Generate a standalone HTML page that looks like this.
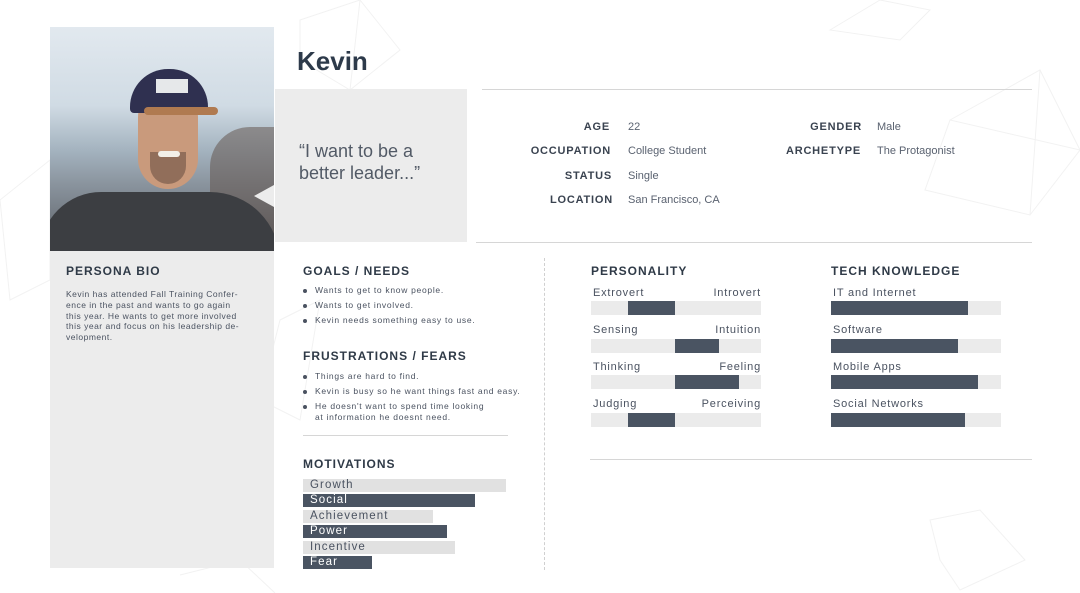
<!DOCTYPE html>
<html><head><meta charset="utf-8"><style>
*{margin:0;padding:0;box-sizing:border-box}
body{width:1080px;height:593px;background:#fff;position:relative;overflow:hidden;font-family:"Liberation Sans",sans-serif;color:#2f3a47}
.a{position:absolute}
.h{font-weight:bold;font-size:12px;letter-spacing:1px;color:#2f3a47}
.t{font-size:8.5px;letter-spacing:.7px;color:#4a5260;white-space:nowrap}
.lbl{font-weight:bold;font-size:11px;letter-spacing:.8px;text-align:right;width:150px;color:#3a4350}
.val{font-size:11px;color:#5a6270}
.bar{position:absolute;height:14px;background:#ebebeb}
.dk{position:absolute;height:14px;background:#4a5462}
.pl{font-size:11px;letter-spacing:.8px;color:#4a5260}
.mb{position:absolute;left:303px;height:13px;font-size:11.5px;letter-spacing:1.1px;padding-left:7px;line-height:13px}
.mb.l{background:#e1e1e1;color:#4a5260}.mb.d{background:#4a5462;color:#fff}
.dot{position:absolute;width:4px;height:4px;border-radius:50%;background:#4a5260}
</style></head><body>
<svg class="a" style="left:0;top:0" width="1080" height="593" stroke="#f2f2f2" fill="none" stroke-width="1">
<path d="M300 20 L360 0 L400 50 L350 90 L300 60Z M360 0 L350 90"/>
<path d="M950 120 L1040 70 L1080 150 L1030 215 L925 190Z M1040 70 L1030 215 M950 120 L1080 150"/>
<path d="M830 30 L880 0 L930 10 L900 40Z"/>
<path d="M0 200 L50 160 L50 280 L10 300Z"/>
<path d="M280 320 L320 300 L300 420 L260 400Z"/>
<path d="M930 520 L980 510 L1025 560 L960 590 L940 560Z"/>
<path d="M180 575 L240 560 L275 593"/>
</svg>
<!-- photo -->
<div class="a" style="left:50px;top:27px;width:224px;height:224px;overflow:hidden;background:linear-gradient(180deg,#e2e9ef 0%,#d0dbe4 35%,#a4b3bf 55%,#8a949e 70%,#5a5e64 100%)">
<div class="a" style="left:160px;top:100px;width:80px;height:120px;background:#5e4e46;border-radius:40px 0 0 0;opacity:.5"></div>
<div class="a" style="left:-10px;top:165px;width:240px;height:70px;background:#3c3e42;border-radius:70px 80px 0 0"></div>
<div class="a" style="left:88px;top:62px;width:60px;height:100px;background:#c99a7c;border-radius:28px 28px 30px 30px"></div>
<div class="a" style="left:80px;top:42px;width:78px;height:44px;background:#2f3050;border-radius:38px 38px 4px 4px"></div>
<div class="a" style="left:106px;top:52px;width:32px;height:14px;background:#e6e8ea"></div>
<div class="a" style="left:94px;top:80px;width:74px;height:8px;background:#b07a50;border-radius:4px"></div>
<div class="a" style="left:100px;top:125px;width:36px;height:32px;background:#6d5244;border-radius:0 0 18px 18px;opacity:.6"></div>
<div class="a" style="left:108px;top:124px;width:22px;height:6px;background:#f2efe8;border-radius:3px"></div>
</div>
<div class="a" style="left:254px;top:185px;width:0;height:0;border-top:11px solid transparent;border-bottom:11px solid transparent;border-right:20px solid #ececec"></div>
<!-- bio -->
<div class="a" style="left:50px;top:251px;width:224px;height:317px;background:#ececec"></div>
<div class="a h" style="left:66px;top:264px">PERSONA BIO</div>
<div class="a t" style="left:66px;top:289px;line-height:10.8px;white-space:normal;width:205px;font-size:8.5px;letter-spacing:.5px">Kevin has attended Fall Training Confer-<br>ence in the past and wants to go again<br>this year. He wants to get more involved<br>this year and focus on his leadership de-<br>velopment.</div>
<!-- name & quote -->
<div class="a" style="left:297px;top:46px;font-size:26px;font-weight:bold;color:#2d3a4a">Kevin</div>
<div class="a" style="left:275px;top:89px;width:192px;height:153px;background:#ececec"></div>
<div class="a" style="left:299px;top:140px;font-size:18px;line-height:22px;color:#525a66">“I want to be a<br>better leader...”</div>
<div class="a" style="left:482px;top:89px;width:550px;height:1px;background:#d6d6d6"></div>
<div class="a" style="left:476px;top:242px;width:556px;height:1px;background:#d6d6d6"></div>
<!-- info -->
<div class="a lbl" style="left:460px;top:121px">AGE</div><div class="a val" style="left:628px;top:121px">22</div>
<div class="a lbl" style="left:461px;top:145px">OCCUPATION</div><div class="a val" style="left:628px;top:145px">College Student</div>
<div class="a lbl" style="left:462px;top:170px">STATUS</div><div class="a val" style="left:628px;top:170px">Single</div>
<div class="a lbl" style="left:463px;top:194px">LOCATION</div><div class="a val" style="left:628px;top:194px">San Francisco, CA</div>
<div class="a lbl" style="left:712px;top:121px">GENDER</div><div class="a val" style="left:877px;top:121px">Male</div>
<div class="a lbl" style="left:711px;top:145px">ARCHETYPE</div><div class="a val" style="left:877px;top:145px">The Protagonist</div>
<!-- goals -->
<div class="a h" style="left:303px;top:264px">GOALS / NEEDS</div>
<div class="dot" style="left:303px;top:289px"></div><div class="a t" style="left:315px;top:285px">Wants to get to know people.</div>
<div class="dot" style="left:303px;top:304px"></div><div class="a t" style="left:315px;top:300px">Wants to get involved.</div>
<div class="dot" style="left:303px;top:319px"></div><div class="a t" style="left:315px;top:315px">Kevin needs something easy to use.</div>
<div class="a h" style="left:303px;top:349px">FRUSTRATIONS / FEARS</div>
<div class="dot" style="left:303px;top:375px"></div><div class="a t" style="left:315px;top:371px">Things are hard to find.</div>
<div class="dot" style="left:303px;top:390px"></div><div class="a t" style="left:315px;top:386px">Kevin is busy so he want things fast and easy.</div>
<div class="dot" style="left:303px;top:405px"></div><div class="a t" style="left:315px;top:401px;line-height:10.5px">He doesn't want to spend time looking<br>at information he doesnt need.</div>
<div class="a" style="left:303px;top:435px;width:205px;height:1px;background:#d6d6d6"></div>
<div class="a h" style="left:303px;top:457px">MOTIVATIONS</div>
<div class="mb l" style="top:479px;width:203px">Growth</div>
<div class="mb d" style="top:494px;width:172px">Social</div>
<div class="mb l" style="top:510px;width:130px">Achievement</div>
<div class="mb d" style="top:525px;width:144px">Power</div>
<div class="mb l" style="top:541px;width:152px">Incentive</div>
<div class="mb d" style="top:556px;width:69px">Fear</div>
<div class="a" style="left:544px;top:258px;width:0;height:312px;border-left:1px dashed #d0d0d0"></div>
<!-- personality -->
<div class="a h" style="left:591px;top:264px">PERSONALITY</div>
<div class="a pl" style="left:593px;top:287px">Extrovert</div><div class="a pl" style="left:661px;top:287px;width:100px;text-align:right">Introvert</div>
<div class="bar" style="left:591px;top:301px;width:170px"></div><div class="dk" style="left:628px;top:301px;width:47px"></div>
<div class="a pl" style="left:593px;top:324px">Sensing</div><div class="a pl" style="left:661px;top:324px;width:100px;text-align:right">Intuition</div>
<div class="bar" style="left:591px;top:339px;width:170px"></div><div class="dk" style="left:675px;top:339px;width:44px"></div>
<div class="a pl" style="left:593px;top:361px">Thinking</div><div class="a pl" style="left:661px;top:361px;width:100px;text-align:right">Feeling</div>
<div class="bar" style="left:591px;top:375px;width:170px"></div><div class="dk" style="left:675px;top:375px;width:64px"></div>
<div class="a pl" style="left:593px;top:398px">Judging</div><div class="a pl" style="left:661px;top:398px;width:100px;text-align:right">Perceiving</div>
<div class="bar" style="left:591px;top:413px;width:170px"></div><div class="dk" style="left:628px;top:413px;width:47px"></div>
<!-- tech -->
<div class="a h" style="left:831px;top:264px">TECH KNOWLEDGE</div>
<div class="a pl" style="left:833px;top:287px">IT and Internet</div>
<div class="bar" style="left:831px;top:301px;width:170px"></div><div class="dk" style="left:831px;top:301px;width:137px"></div>
<div class="a pl" style="left:833px;top:324px">Software</div>
<div class="bar" style="left:831px;top:339px;width:170px"></div><div class="dk" style="left:831px;top:339px;width:127px"></div>
<div class="a pl" style="left:833px;top:361px">Mobile Apps</div>
<div class="bar" style="left:831px;top:375px;width:170px"></div><div class="dk" style="left:831px;top:375px;width:147px"></div>
<div class="a pl" style="left:833px;top:398px">Social Networks</div>
<div class="bar" style="left:831px;top:413px;width:170px"></div><div class="dk" style="left:831px;top:413px;width:134px"></div>
<div class="a" style="left:590px;top:459px;width:442px;height:1px;background:#d6d6d6"></div>
</body></html>
